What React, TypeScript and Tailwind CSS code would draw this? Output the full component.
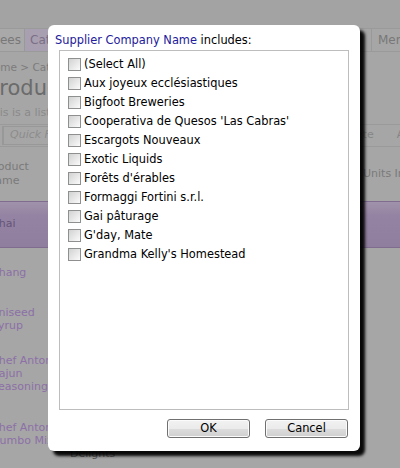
import React from 'react';

const items = [
  '(Select All)',
  'Aux joyeux ecclésiastiques',
  'Bigfoot Breweries',
  "Cooperativa de Quesos 'Las Cabras'",
  'Escargots Nouveaux',
  'Exotic Liquids',
  "Forêts d'érables",
  'Formaggi Fortini s.r.l.',
  'Gai pâturage',
  "G'day, Mate",
  "Grandma Kelly's Homestead",
];

function Checkbox() {
  return (
    <span className="block w-[13px] h-[13px] shrink-0 border border-[#8e8f8f] bg-[linear-gradient(135deg,#d2d2d2_0%,#e8e8e8_55%,#fbfbfb_100%)]" />
  );
}

function DlgButton({ label }: { label: string }) {
  return (
    <button className="flex items-center justify-center w-[83px] h-[19px] border border-[#707070] rounded-[3px] bg-[linear-gradient(#f2f2f2_0%,#ebebeb_50%,#dddddd_50%,#cfcfcf_100%)] shadow-[inset_0_0_0_1px_#fbfbfb] text-[11.4px] leading-none text-black">
      {label}
    </button>
  );
}

export default function App() {
  return (
    <div className="relative w-[400px] h-[468px] overflow-hidden bg-[#a6a6a6] font-['DejaVu_Sans',sans-serif] text-[11px]">
      {/* faded page behind the modal */}
      <div className="h-[28px] bg-[#a3a3a3]" />
      <div className="flex h-[24px] border-y border-[#9a9a9a] text-[12px] text-[#787878]">
        <div className="flex w-[25px] shrink-0 items-center justify-end overflow-hidden border-r border-[#999] bg-[#a9a9a9] pr-[3px] whitespace-nowrap">
          Employees
        </div>
        <div className="flex w-[90px] shrink-0 items-center bg-[#a89fb1] pl-[5px] text-[#7b6f86] whitespace-nowrap">
          Categories
        </div>
        <div className="flex-1" />
        <div className="flex w-[29px] shrink-0 items-center overflow-hidden border-l border-[#999] pl-[6px] whitespace-nowrap">
          Members
        </div>
      </div>
      <div className="mt-[8px] flex h-[16px] items-center">
        <span className="ml-[-14px] whitespace-nowrap text-[10.5px] text-[#7c7c7c]">Home &gt; Categories</span>
      </div>
      <div className="flex h-[26px] items-start">
        <span className="ml-[-13px] mt-[-1px] whitespace-nowrap text-[21px] leading-[26px] text-[#6b6b6b]">
          Products
        </span>
      </div>
      <div className="mt-[2px] flex h-[18px] items-center">
        <span className="ml-[-14px] whitespace-nowrap text-[#8a8a8a]">This is a list of products</span>
      </div>
      <div className="mt-[2px] flex h-[23px] items-center border-y border-[#9a9a9a] text-[#858585]">
        <div className="h-[19px] w-[3px] shrink-0 border-r border-[#989898]" />
        <div className="flex h-[19px] w-[300px] shrink-0 items-center border border-[#989898] pl-[6px] italic text-[#8c8c8c]">
          Quick Filter
        </div>
        <div className="flex-1" />
        <span className="whitespace-nowrap">Delete</span>
        <span className="ml-[23px] mr-[-18px] whitespace-nowrap">Add</span>
      </div>
      <div className="flex h-[54px] items-center text-[#7a7a7a]">
        <div className="ml-[-13px] w-[376px] shrink-0 leading-[14px]">
          Product
          <br />
          Name
        </div>
        <span className="shrink-0 whitespace-nowrap">Units In Stock</span>
      </div>
      <div className="flex h-[47px] items-center border-y border-[#7f6c8f] bg-[linear-gradient(#a092ab_0%,#9483a2_30%,#8f7e9d_100%)]">
        <span className="ml-[-9px] text-[#65557a]">Chai</span>
      </div>
      <div className="text-[#8c70a6] leading-[13px]">
        <div className="flex h-[48px] items-center">
          <span className="ml-[-9px]">Chang</span>
        </div>
        <div className="flex h-[46px] items-center">
          <span className="ml-[-9px]">
            Aniseed
            <br />
            Syrup
          </span>
        </div>
        <div className="flex h-[62px] items-center">
          <span className="ml-[-9px]">
            Chef Anton's
            <br />
            Cajun
            <br />
            Seasoning
          </span>
        </div>
        <div className="flex h-[59px] items-center">
          <span className="ml-[-9px] w-[79px] shrink-0">
            Chef Anton's
            <br />
            Gumbo Mix
          </span>
          <span className="text-[#5a5a5a]">
            New
            <br />
            Orleans
            <br />
            Cajun
            <br />
            Delights
          </span>
        </div>
      </div>

      {/* modal dialog */}
      <div className="absolute left-[48px] top-[25px] flex h-[426px] w-[312px] flex-col rounded-[6px] bg-white shadow-[5px_5px_3px_rgba(0,0,0,0.95)] text-[11.4px] text-black">
        <div className="px-[7px] pt-[8px] leading-[14px] h-[22px] whitespace-nowrap">
          <span className="text-[#22209c]">Supplier Company Name</span> includes:
        </div>
        <div className="mx-[11px] mt-[3px] flex h-[360px] flex-col border border-[#bdbdbd] pl-[8px] pt-[4px]">
          {items.map((it) => (
            <div key={it} className="flex h-[19px] items-center gap-[3px] whitespace-nowrap">
              <Checkbox />
              <span>{it}</span>
            </div>
          ))}
        </div>
        <div className="mt-[9px] flex justify-end gap-[15px] pr-[12px]">
          <DlgButton label="OK" />
          <DlgButton label="Cancel" />
        </div>
      </div>
    </div>
  );
}
